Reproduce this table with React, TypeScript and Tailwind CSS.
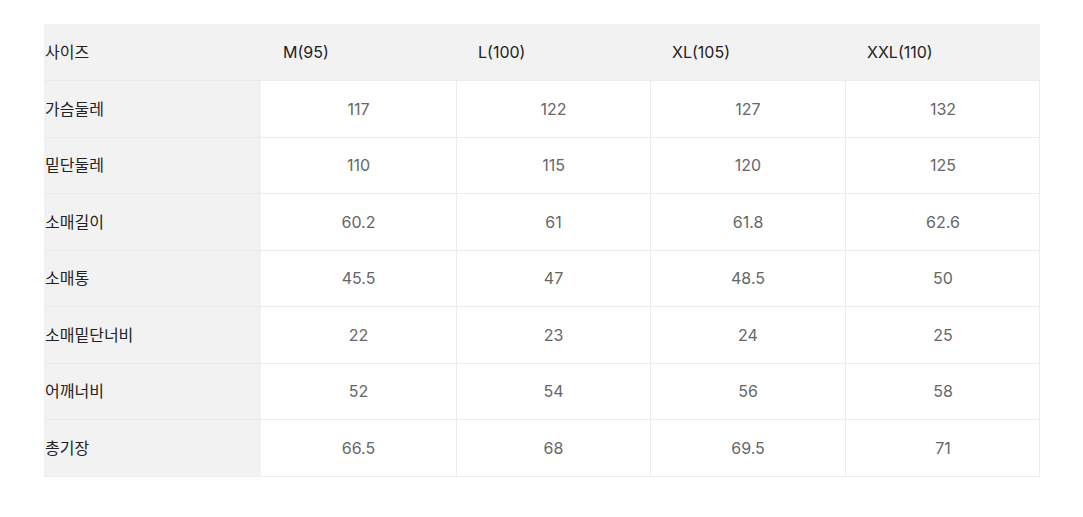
const sizes = ['M(95)', 'L(100)', 'XL(105)', 'XXL(110)'];

const rows: [string, string[]][] = [
  ['가슴둘레', ['117', '122', '127', '132']],
  ['밑단둘레', ['110', '115', '120', '125']],
  ['소매길이', ['60.2', '61', '61.8', '62.6']],
  ['소매통', ['45.5', '47', '48.5', '50']],
  ['소매밑단너비', ['22', '23', '24', '25']],
  ['어깨너비', ['52', '54', '56', '58']],
  ['총기장', ['66.5', '68', '69.5', '71']],
];

export default function App() {
  return (
    <div
      className="min-h-[517px] w-[1083px] bg-white pl-[44px] pt-[24px]"
      style={{ fontFamily: 'Inter, "Noto Sans CJK KR", sans-serif' }}
    >
      <div className="grid w-[996px] grid-cols-[217px_195px_194px_195px_195px] border-b border-r border-[#ececec] text-[16px]">
        <div className="flex h-[56px] items-center bg-[#f2f2f2] pl-[1px] text-[#222]">사이즈</div>
        {sizes.map((s) => (
          <div key={s} className="flex h-[56px] items-center bg-[#f2f2f2] pl-[22px] text-[#222]">
            {s}
          </div>
        ))}
        {rows.map(([label, vals]) => (
          <div key={label} className="contents">
            <div className="flex h-[56.5px] items-center border-t border-[#ebebeb] bg-[#f2f2f2] pl-[1px] text-[#222]">
              {label}
            </div>
            {vals.map((v, i) => (
              <div
                key={i}
                className={`flex h-[56.5px] items-center justify-center border-t border-[#ececec] text-[#666] ${i > 0 ? 'border-l' : ''}`}
              >
                {v}
              </div>
            ))}
          </div>
        ))}
      </div>
    </div>
  );
}
